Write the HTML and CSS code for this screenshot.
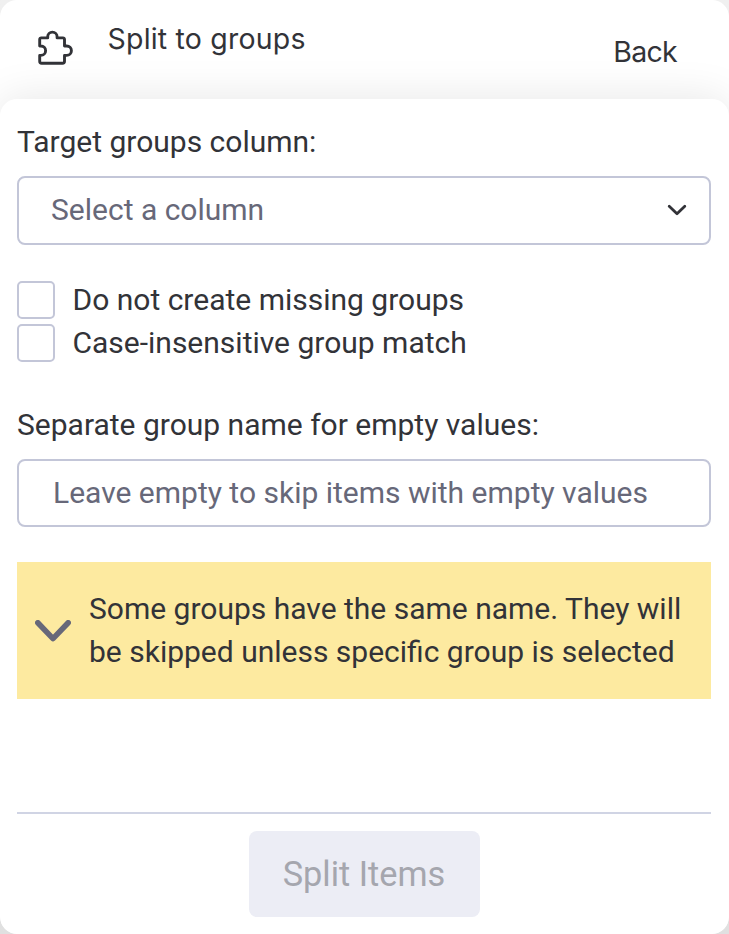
FILE: index.html
```html
<!DOCTYPE html>
<html lang="en">
<head>
    <meta charset="UTF-8">
    <meta name="viewport" content="width=device-width, initial-scale=1.0">
    <title>Split to groups</title>
    <link rel="stylesheet" href="styles.css">
</head>
<body>
    <div class="dialog">
        <header class="header">
            <svg class="puzzle-icon" viewBox="0 0 36 36" width="36" height="36">
                <path d="M2.7 9.4a1.5 1.5 0 0 1 1.5-1.5H10.7V6.8a4.7 4.7 0 0 1 9.4 0V7.9H26a1.5 1.5 0 0 1 1.5 1.5V16h2.2a4.7 4.7 0 0 1 0 9.4H27.5V31.2a2 2 0 0 1-2 2H4.7a2 2 0 0 1-2-2V25.4H3.9a4.7 4.7 0 0 0 0-9.4H2.7Z"/>
            </svg>
            <h1 class="title">Split to groups</h1>
            <a class="back">Back</a>
        </header>

        <main class="panel">
            <label class="label">Target groups column:</label>
            <div class="field select">
                <span>Select a column</span>
                <svg viewBox="0 0 20 12" width="20" height="12">
                    <path d="M2.2 2.2L10 9.7L17.8 2.2"/>
                </svg>
            </div>

            <div class="options">
                <label class="option"><span class="box"></span>Do not create missing groups</label>
                <label class="option"><span class="box"></span>Case-insensitive group match</label>
            </div>

            <label class="label">Separate group name for empty values:</label>
            <div class="field input">Leave empty to skip items with empty values</div>

            <div class="warning">
                <svg viewBox="0 0 36 22" width="36" height="22">
                    <path d="M2.8 2.8L18 18.6L33.2 2.8"/>
                </svg>
                <p>Some groups have the same name. They will<br>be skipped unless specific group is selected</p>
            </div>

            <footer class="footer">
                <button class="split-btn" disabled>Split Items</button>
            </footer>
        </main>
    </div>
</body>
</html>
```
FILE: styles.css
```css
* {
    box-sizing: border-box;
}
body {
    margin: 0;
    background: linear-gradient(#f0f0f0, #e0e0e0);
    font-family: Roboto, sans-serif;
    font-size: 30px;
    line-height: 43px;
    color: #323338;
}
svg {
    fill: none;
    stroke-linecap: round;
    stroke-linejoin: round;
    flex: none;
}
.dialog {
    height: 934px;
    display: flex;
    flex-direction: column;
    background: #fff;
    border-radius: 17px;
    overflow: hidden;
}
.header {
    height: 99px;
    display: flex;
    align-items: flex-start;
    padding: 17px 52px 0 37px;
    font-family: Inter, sans-serif;
    font-size: 28.5px;
}
.puzzle-icon {
    margin-top: 13px;
    stroke: #323338;
    stroke-width: 2.9;
}
.title {
    flex: 1;
    margin: 0 0 0 34.5px;
    font-size: 28.5px;
    font-weight: 400;
    letter-spacing: 0.2px;
}
.back {
    margin-top: 13px;
    letter-spacing: -0.7px;
}
.panel {
    flex: 1;
    display: flex;
    flex-direction: column;
    padding: 21px 18px 17px 17px;
    background: #fff;
    border-radius: 17px;
    box-shadow: 0 0 44px rgba(0, 0, 0, 0.1);
}
.field {
    height: 69px;
    margin-top: 13px;
    border: 2px solid #c3c6d8;
    border-radius: 8px;
    color: #676879;
    display: flex;
    align-items: center;
}
.select {
    justify-content: space-between;
    padding: 0 22px 2px 32px;
}
.select svg {
    stroke: #323338;
    stroke-width: 2.8;
}
.input {
    height: 68px;
    padding: 0 0 2px 34px;
}
.options {
    margin: 33px 0 39px;
}
.option {
    display: flex;
    align-items: center;
    gap: 17.5px;
    height: 43px;
}
.box {
    width: 38px;
    height: 38px;
    border: 2px solid #c3c6d8;
    border-radius: 5px;
}
.warning {
    display: flex;
    align-items: center;
    gap: 18px;
    height: 137px;
    margin-top: 35px;
    padding-left: 18px;
    background: #fdeaa0;
}
.warning p {
    margin: 0;
    padding-bottom: 2px;
    white-space: nowrap;
}
.warning svg {
    stroke: #676879;
    stroke-width: 5.6;
}
.footer {
    margin-top: auto;
    padding-top: 17px;
    border-top: 2px solid #d0d4e4;
    display: flex;
    justify-content: center;
}
.split-btn {
    width: 231px;
    height: 86px;
    border: none;
    border-radius: 8px;
    background: #ecedf5;
    color: #a5a6ae;
    font-family: inherit;
    font-size: 34.3px;
}
```
